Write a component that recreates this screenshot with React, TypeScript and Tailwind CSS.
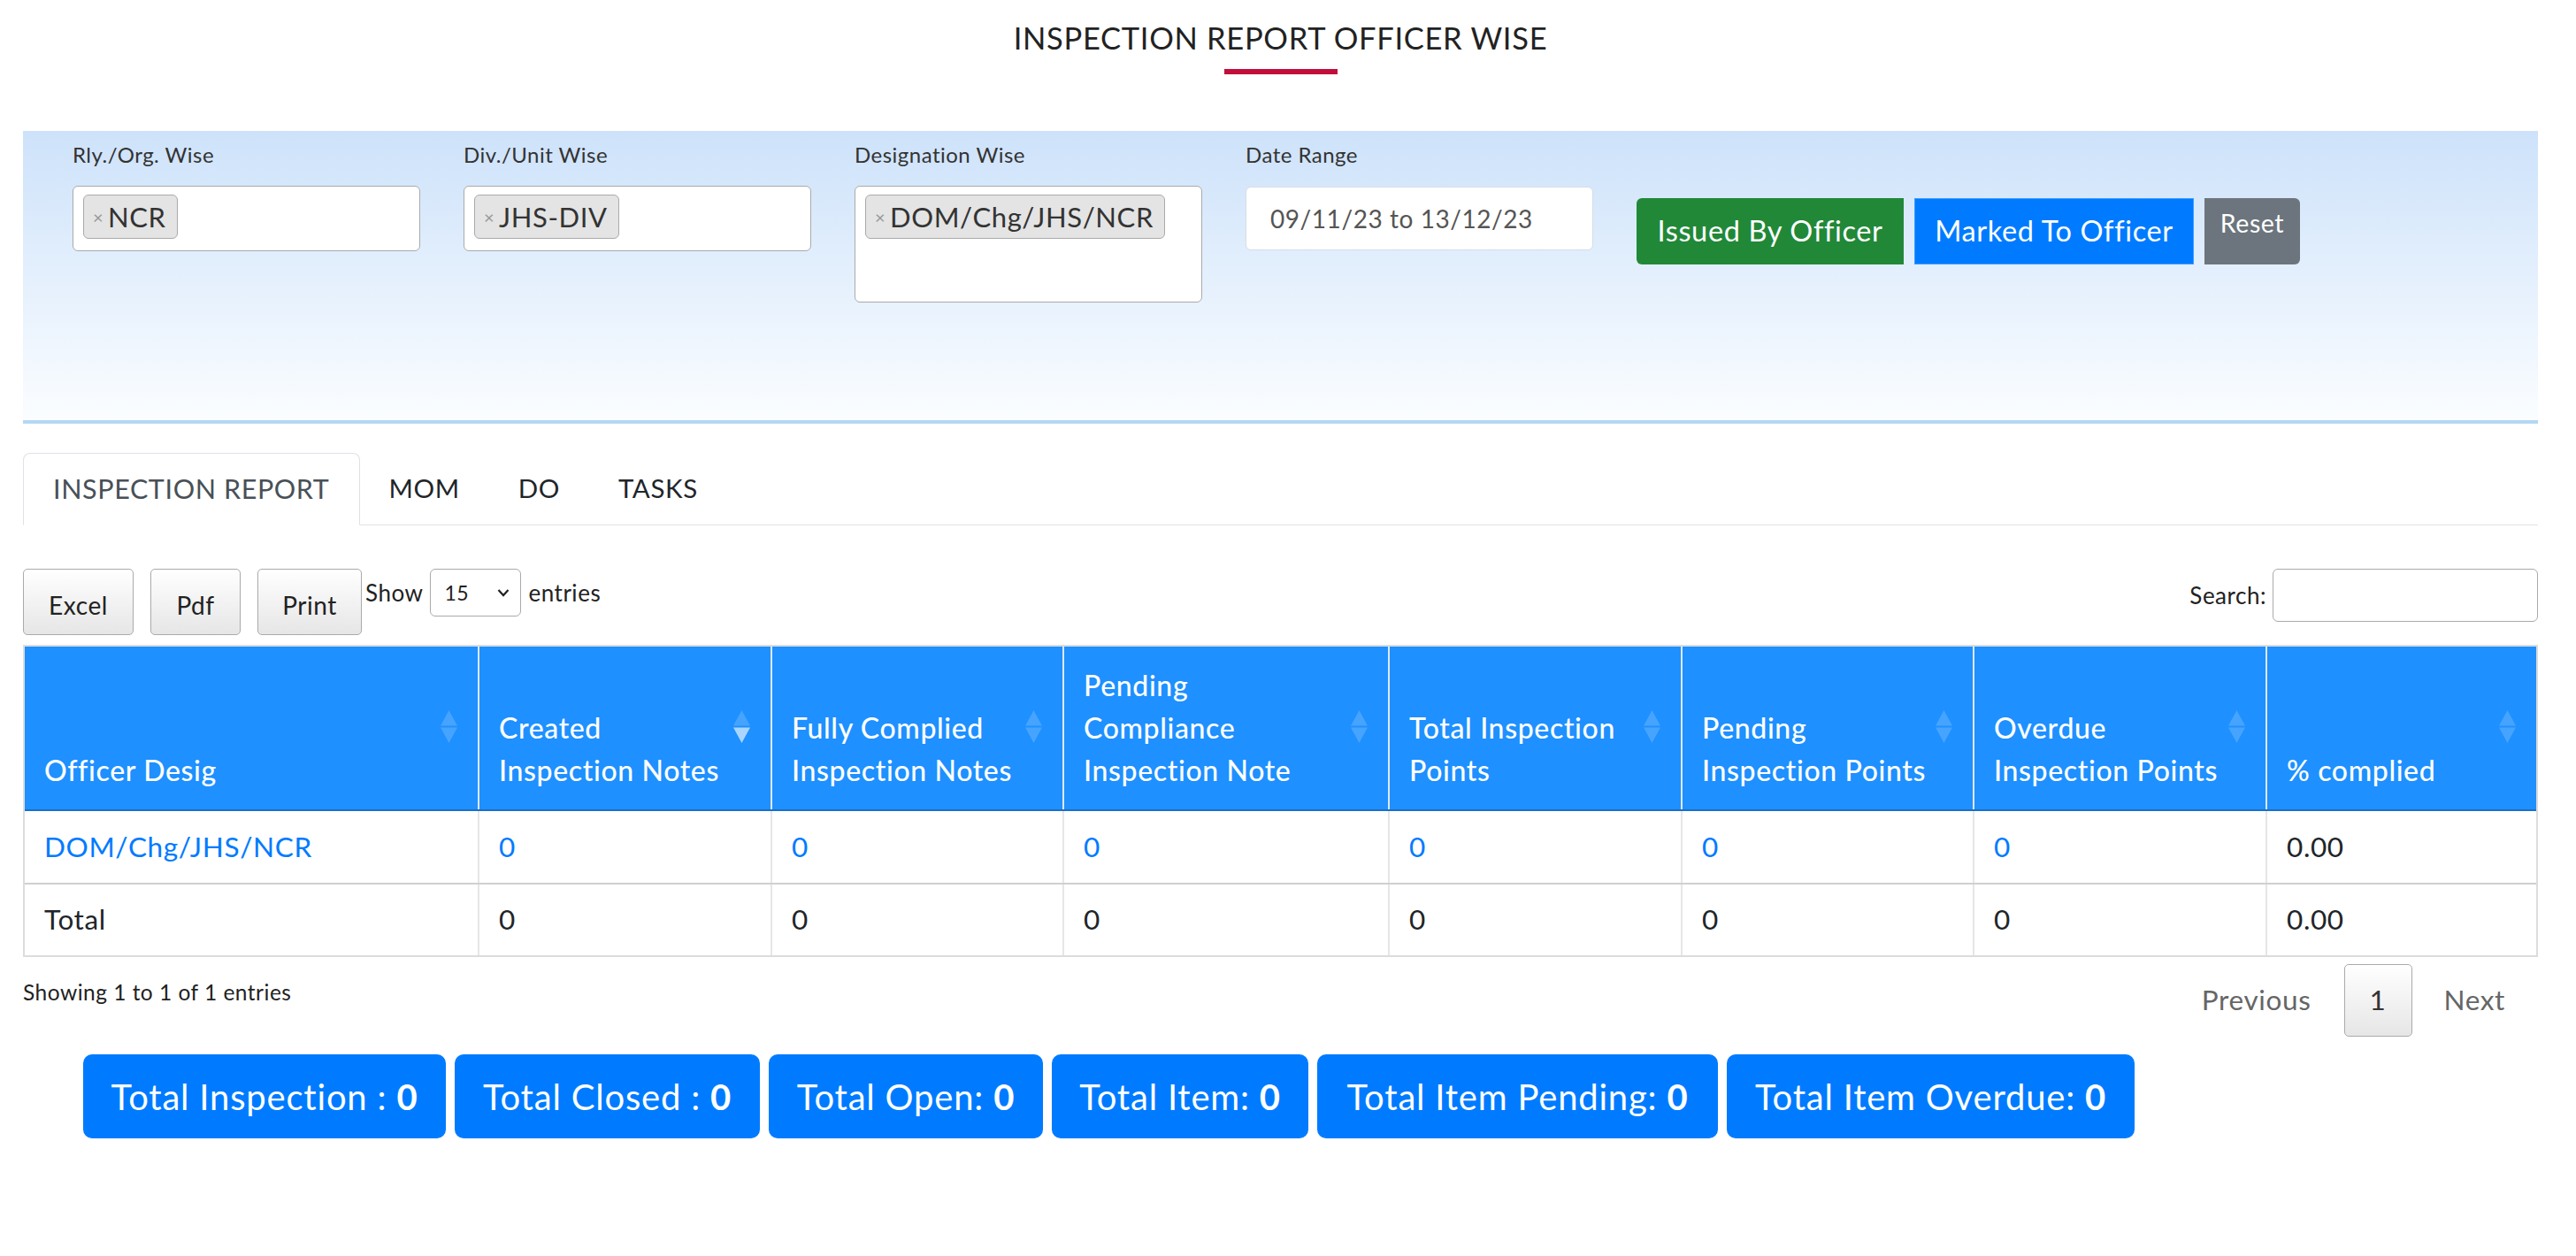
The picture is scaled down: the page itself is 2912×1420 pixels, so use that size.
import React from "react";

function SortIcon({ active }: { active?: boolean }) {
  return (
    <svg
      width="19"
      height="37"
      viewBox="0 0 19 37"
      className="absolute right-[23px] top-[72px]"
    >
      <path d="M9.5 0 L19 17.5 L0 17.5 Z" fill="#ffffff" fillOpacity={0.18} />
      <path
        d="M0 19.5 L19 19.5 L9.5 37 Z"
        fill="#ffffff"
        fillOpacity={active ? 0.62 : 0.18}
      />
    </svg>
  );
}

function Tag({ text }: { text: string }) {
  return (
    <span className="inline-flex h-[50px] items-center rounded-[6px] border border-[#aaaaaa] bg-[#e4e4e4] pl-[10px] pr-[12px]">
      <span className="mr-[5px] text-[20px] leading-none text-[#999999]">×</span>
      <span className="text-[31px] leading-none text-[#333333]">{text}</span>
    </span>
  );
}

function Field({ label, children }: { label: string; children: React.ReactNode }) {
  return (
    <div className="mr-[49px] flex w-[393px] flex-col">
      <div className="text-[24px] leading-[24px] text-[#333333]">{label}</div>
      <div className="mt-[23px]">{children}</div>
    </div>
  );
}

const cols = [
  { w: "w-[512px]", lines: ["Officer Desig"] },
  { w: "w-[331px]", lines: ["Created", "Inspection Notes"], active: true },
  { w: "w-[330px]", lines: ["Fully Complied", "Inspection Notes"] },
  { w: "w-[368px]", lines: ["Pending", "Compliance", "Inspection Note"] },
  { w: "w-[331px]", lines: ["Total Inspection", "Points"] },
  { w: "w-[330px]", lines: ["Pending", "Inspection Points"] },
  { w: "w-[331px]", lines: ["Overdue", "Inspection Points"] },
  { w: "w-[306px]", lines: ["% complied"] },
];

const row1 = ["DOM/Chg/JHS/NCR", "0", "0", "0", "0", "0", "0", "0.00"];
const row2 = ["Total", "0", "0", "0", "0", "0", "0", "0.00"];

const badges = [
  { w: "w-[410px]", label: "Total Inspection : ", n: "0" },
  { w: "w-[345px]", label: "Total Closed : ", n: "0" },
  { w: "w-[310px]", label: "Total Open: ", n: "0" },
  { w: "w-[290px]", label: "Total Item: ", n: "0" },
  { w: "w-[453px]", label: "Total Item Pending: ", n: "0" },
  { w: "w-[461px]", label: "Total Item Overdue: ", n: "0" },
];

export default function App() {
  return (
    <div className="min-h-[1420px] w-full bg-white font-[family-name:Lato,sans-serif] text-[#212529] [&_*]:tracking-[0.02em]">
      <div className="pl-[26px] pr-[43px]">
        {/* Title */}
        <div className="flex flex-col items-center pt-[22px]">
          <h1 className="text-[34.5px] font-normal leading-[42px] text-[#222222]">
            INSPECTION REPORT OFFICER WISE
          </h1>
          <div className="mt-[14px] h-[6px] w-[128px] bg-[#c20e3b]" />
        </div>

        {/* Filter panel */}
        <div className="mt-[64px] flex h-[331px] items-start border-b-4 border-[#b3d8f4] bg-linear-to-b from-[#cde2fa] to-[#fbfdff] pl-[56px] pt-[15px]">
          <Field label="Rly./Org. Wise">
            <div className="h-[74px] rounded-[6px] border border-[#aaaaaa] bg-white px-[11px] pt-[9px]">
              <Tag text="NCR" />
            </div>
          </Field>
          <Field label="Div./Unit Wise">
            <div className="h-[74px] rounded-[6px] border border-[#aaaaaa] bg-white px-[11px] pt-[9px]">
              <Tag text="JHS-DIV" />
            </div>
          </Field>
          <Field label="Designation Wise">
            <div className="h-[132px] rounded-[6px] border border-[#aaaaaa] bg-white px-[11px] pt-[9px]">
              <Tag text="DOM/Chg/JHS/NCR" />
            </div>
          </Field>
          <Field label="Date Range">
            <div className="mt-px flex h-[72px] items-center rounded-[6px] border border-[#d6dde6] bg-white pl-[27px] text-[28px] text-[#555555]">
              09/11/23 to 13/12/23
            </div>
          </Field>
          <div className="mt-[61px] flex gap-[12px]">
            <button className="flex h-[75px] w-[302px] items-center justify-center rounded-l-[6px] bg-[#218838] text-[32.5px] text-white">
              Issued By Officer
            </button>
            <button className="flex h-[75px] w-[316px] items-center justify-center border border-[#3c9cff] bg-[#007bff] text-[32.5px] text-white">
              Marked To Officer
            </button>
            <button className="flex h-[75px] w-[108px] items-start justify-center rounded-r-[6px] bg-[#6c757d] pt-[12px] text-[28.5px] leading-[32px] text-white">
              Reset
            </button>
          </div>
        </div>

        {/* Tabs */}
        <div className="mt-[33px] flex border-b border-[#dee2e6]">
          <div className="-mb-px flex h-[82px] items-center rounded-t-[8px] border border-[#dee2e6] border-b-white bg-white px-[33px] text-[30.5px] text-[#495057]">
            INSPECTION REPORT
          </div>
          <div className="flex h-[81px] items-center px-[33px] text-[29.5px] text-[#212529]">MOM</div>
          <div className="flex h-[81px] items-center px-[33px] text-[29.5px] text-[#212529]">DO</div>
          <div className="flex h-[81px] items-center px-[33px] text-[29.5px] text-[#212529]">TASKS</div>
        </div>

        {/* Toolbar */}
        <div className="mt-[49px] flex items-start">
          <div className="flex gap-[19px]">
            <button className="h-[75px] w-[125px] rounded-[5px] border border-[#aaaaaa] bg-linear-to-b from-white to-[#e6e6e6] pt-[6px] text-[28px] text-[#222222]">
              Excel
            </button>
            <button className="h-[75px] w-[102px] rounded-[5px] border border-[#aaaaaa] bg-linear-to-b from-white to-[#e6e6e6] pt-[6px] text-[28px] text-[#222222]">
              Pdf
            </button>
            <button className="h-[75px] w-[118px] rounded-[5px] border border-[#aaaaaa] bg-linear-to-b from-white to-[#e6e6e6] pt-[6px] text-[28px] text-[#222222]">
              Print
            </button>
          </div>
          <div className="ml-[4px] flex items-center gap-[8px] text-[26px] text-[#222222]">
            <span>Show</span>
            <div className="flex h-[54px] w-[103px] items-center justify-between rounded-[6px] border border-[#aaaaaa] bg-white pl-[15px] pr-[12px]">
              <span className="text-[23px]">15</span>
              <svg width="14" height="10" viewBox="0 0 14 10">
                <path d="M1.5 2 L7 8 L12.5 2" fill="none" stroke="#222" strokeWidth="2.2" />
              </svg>
            </div>
            <span>entries</span>
          </div>
          <div className="ml-auto flex items-center gap-[7px] text-[26px] text-[#222222]">
            <span>Search:</span>
            <div className="h-[60px] w-[300px] rounded-[6px] border border-[#aaaaaa] bg-white" />
          </div>
        </div>

        {/* Table */}
        <div className="mt-[11px] border-2 border-[#dcdcdc]">
          <div className="flex border-b-2 border-[#1b6fc6] bg-[#1e90ff]">
            {cols.map((c, i) => (
              <div
                key={i}
                className={`relative flex h-[184px] flex-col justify-end pb-[20px] pl-[22px] text-[32px] font-medium leading-[48px] text-white ${c.w} ${
                  i > 0 ? "border-l-2 border-[#dfe7ef]" : ""
                }`}
              >
                {c.lines.map((l, j) => (
                  <div key={j} className="whitespace-nowrap">
                    {l}
                  </div>
                ))}
                <SortIcon active={c.active} />
              </div>
            ))}
          </div>
          <div className="flex border-b-2 border-[#d0d0d0]">
            {row1.map((v, i) => (
              <div
                key={i}
                className={`flex h-[81px] items-center pl-[22px] text-[31.5px] ${cols[i].w} ${
                  i > 0 ? "border-l-2 border-[#e6e6e6]" : ""
                } ${i < 7 ? "text-[#007bff]" : "text-[#212529]"}`}
              >
                {v}
              </div>
            ))}
          </div>
          <div className="flex">
            {row2.map((v, i) => (
              <div
                key={i}
                className={`flex h-[80px] items-center pl-[22px] text-[31.5px] text-[#212529] ${cols[i].w} ${
                  i > 0 ? "border-l-2 border-[#e6e6e6]" : ""
                }`}
              >
                {v}
              </div>
            ))}
          </div>
        </div>

        {/* Info & pagination */}
        <div className="mt-[8px] flex items-start justify-between">
          <div className="pt-[17px] text-[24.5px] leading-[30px] text-[#222222]">
            Showing 1 to 1 of 1 entries
          </div>
          <div className="flex items-center text-[31.5px]">
            <span className="px-[37px] text-[#666666]">Previous</span>
            <span className="flex h-[82px] w-[77px] items-center justify-center rounded-[5px] border border-[#aaaaaa] bg-linear-to-b from-white to-[#e6e6e6] text-[#333333]">
              1
            </span>
            <span className="pl-[36px] pr-[37px] text-[#666666]">Next</span>
          </div>
        </div>

        {/* Summary badges */}
        <div className="ml-[68px] mt-[20px] flex gap-[10px]">
          {badges.map((b, i) => (
            <div
              key={i}
              className={`flex h-[95px] items-center justify-center rounded-[10px] bg-[#007bff] text-[40px] text-white ${b.w}`}
            >
              <span className="whitespace-pre">{b.label}</span>
              <span className="font-bold">{b.n}</span>
            </div>
          ))}
        </div>
      </div>
    </div>
  );
}
